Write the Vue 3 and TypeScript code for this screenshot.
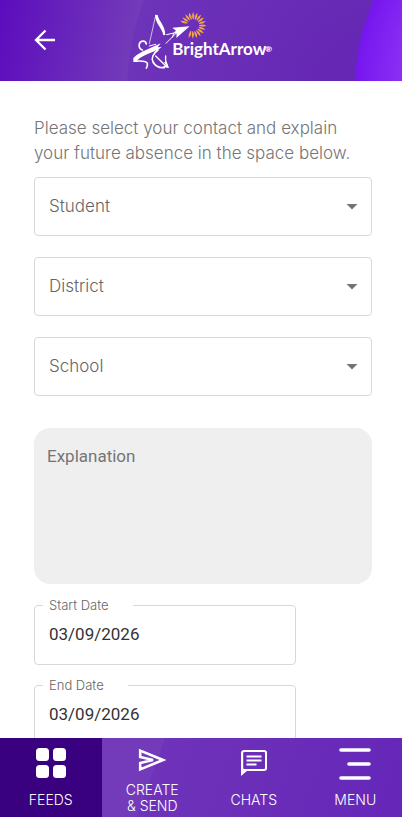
<script setup lang="ts">
import { reactive } from 'vue'

interface Choice {
  id: 'student' | 'district' | 'school'
  label: string
}

interface DateField {
  id: 'start' | 'end'
  label: string
}

const choices: Choice[] = [
  { id: 'student', label: 'Student' },
  { id: 'district', label: 'District' },
  { id: 'school', label: 'School' },
]

const dateFields: DateField[] = [
  { id: 'start', label: 'Start Date' },
  { id: 'end', label: 'End Date' },
]

const form = reactive({
  student: '',
  district: '',
  school: '',
  explanation: '',
  start: '03/09/2026',
  end: '03/09/2026',
})

// The sun's rays run clockwise and leave a gap where the arrow flies in.
const rays: number[] = Array.from({ length: 16 }, (_, i) => -72 + i * 18)
</script>

<template>
  <div class="app">
    <header class="top">
      <button class="back" type="button" aria-label="Back">
        <svg width="24" height="24" viewBox="0 0 24 24" fill="none" stroke="#fff" stroke-width="2.3">
          <path d="M22 12H3.500M12.500 2.500L3 12l9.500 9.500" />
        </svg>
      </button>
      <svg class="logo" width="140" height="60" viewBox="400 30 420 180" role="img" aria-label="BrightArrow">
        <g fill="#f7a540">
          <path
            v-for="angle in rays"
            :key="angle"
            d="M580 58q-6-11 1-22q5 11 1 22z"
            :transform="`rotate(${angle} 580 76)`"
          />
        </g>
        <g fill="#fff">
          <path d="M466 44l8 1c2 17 23 32 23 60l-6 1c-3-22-25-36-25-62z" />
          <path d="M570 79l-52 4 11 9-9 8 11 1-1 13z" />
          <path d="M401 186v-12c10-10 24-18 38-24l44-20-9 12 12-1c-10 9-20 12-33 17-20 8-34 14-44 28z" />
          <path d="M508 204l-20-4 12-4-7-9 8-2z" />
        </g>
        <g fill="none" stroke="#fff" stroke-linecap="round">
          <path stroke-width="2" d="M467 51l-18 80" />
          <path stroke-width="3" d="M499 130l29-29M501 104l21-5-3 12" />
          <path stroke-width="5" d="M440 132c-2-12-18-11-21 0-2 8 1 15 9 18" />
          <path stroke-width="5" d="M406 183c12 1 34-3 37 7 1 6 0 10-3 14" />
          <path stroke-width="5" d="M475 150c-14 10-21 24-15 36 7 13 20 18 34 17" />
          <path stroke-width="4" d="M468 168l30 29M498 168c-1 11 0 22 6 33" />
          <path stroke-width="3" d="M449 138l19-5" />
        </g>
        <text class="wordmark" x="518" y="166">BrightArrow</text>
        <text class="registered" x="797" y="156">®</text>
      </svg>
    </header>

    <main class="content">
      <form class="form" @submit.prevent>
        <p class="intro">Please select your contact and explain your future absence in the space below.</p>

        <div class="choices">
          <div v-for="choice in choices" :key="choice.id" class="choice">
            <select :id="choice.id" v-model="form[choice.id]">
              <option value=""></option>
            </select>
            <label :for="choice.id">{{ choice.label }}</label>
            <svg class="caret" width="12" height="6" viewBox="0 0 12 6" aria-hidden="true">
              <path d="M0.500 0h11L6 5.500z" fill="#757575" />
            </svg>
          </div>
        </div>

        <textarea v-model="form.explanation" class="explanation" placeholder="Explanation" aria-label="Explanation"></textarea>

        <div class="dates">
          <div v-for="field in dateFields" :key="field.id" class="date">
            <label :for="field.id">{{ field.label }}</label>
            <input :id="field.id" v-model="form[field.id]" type="text" />
          </div>
        </div>
      </form>
    </main>

    <nav class="tabs">
      <a class="tab active" href="#feeds">
        <svg width="30" height="30" viewBox="0 0 30 30" fill="#fff">
          <rect x="0" y="0" width="13" height="13" rx="3.500" />
          <rect x="17" y="0" width="13" height="13" rx="3.500" />
          <rect x="0" y="17" width="13" height="13" rx="3.500" />
          <rect x="17" y="17" width="13" height="13" rx="3.500" />
        </svg>
        <span class="caption">FEEDS</span>
      </a>
      <a class="tab two-line" href="#create">
        <svg width="28" height="24" viewBox="0 0 28 24" fill="none" stroke="#fff" stroke-width="2.6">
          <path d="M2.200 2.600L25 12 2.200 21.400V15L15 12 2.200 9z" />
        </svg>
        <span class="caption">CREATE<br />&amp; SEND</span>
      </a>
      <a class="tab" href="#chats">
        <svg width="26" height="30" viewBox="0 0 26 30" fill="none" stroke="#fff" stroke-width="2.200">
          <path d="M1.100 24V5a2 2 0 0 1 2-2h20a2 2 0 0 1 2 2v15a2 2 0 0 1-2 2H5.500z" />
          <path d="M0 20v8L7 22z" fill="#fff" stroke="none" />
          <path d="M5.500 8.500h15M5.500 12.500h15M5.500 16.500h10" />
        </svg>
        <span class="caption">CHATS</span>
      </a>
      <a class="tab" href="#menu">
        <svg width="32" height="32" viewBox="0 0 32 32" fill="none" stroke="#fff" stroke-width="3.600" stroke-linecap="round">
          <path d="M2 2h28M10 16h20M2 30h28" />
        </svg>
        <span class="caption">MENU</span>
      </a>
    </nav>
  </div>
</template>

<style>
body {
  background: #fff;
}
</style>

<style scoped>
.app {
  display: flex;
  flex-direction: column;
  height: 100vh;
  overflow: hidden;
  font-family: Inter, 'Liberation Sans', sans-serif;
  color: #757575;
}

.app *,
.app *::before {
  box-sizing: border-box;
}

.top {
  display: grid;
  grid-template-columns: 1fr auto 1fr;
  align-items: center;
  flex: none;
  height: 81px;
  padding: 0 30px 2px 33px;
  background:
    radial-gradient(circle at 138% 105%, #9036fa 0, #8a2ef4 155px, #7616ef 199px, transparent 200px),
    radial-gradient(circle at 93% 110%, #6425b3 0, #6d33b9 246px, transparent 247px),
    linear-gradient(100deg, #5c0cbd 0, #733bb9 34%, #6728b5 100%);
}

.back {
  display: flex;
  justify-self: start;
  padding: 0;
  border: 0;
  background: none;
}

.logo {
  display: block;
}

.wordmark {
  fill: #fff;
  font: 700 51px Lato, sans-serif;
}

.registered {
  fill: #fff;
  font: 900 25px Lato, sans-serif;
}

.content {
  flex: 1;
  min-height: 0;
  overflow: hidden;
}

.form {
  padding: 35px 30px 20px 34px;
}

.intro {
  margin: 0 0 11px;
  font-size: 17px;
  font-weight: 300;
  line-height: 25px;
  color: #757575;
}

.choices {
  display: grid;
  gap: 21px;
}

.choice {
  display: grid;
  grid-template-columns: 1fr auto;
  align-items: center;
  height: 59px;
}

.choice select {
  grid-area: 1 / 1 / 2 / 3;
  width: 100%;
  height: 100%;
  border: 1px solid #d8d8d8;
  border-radius: 4px;
  background: #fff;
  appearance: none;
}

.choice label {
  grid-area: 1 / 1 / 2 / 2;
  padding: 0 0 2px 15px;
  font-size: 17px;
  font-weight: 300;
  color: #666;
  pointer-events: none;
}

.caret {
  grid-area: 1 / 2 / 2 / 3;
  margin-right: 14px;
  pointer-events: none;
}

.explanation {
  display: block;
  width: 100%;
  height: 156px;
  margin: 32px 0 21px;
  padding: 18px 13px;
  border: 0;
  border-radius: 16px;
  background: #efefef;
  font: 400 17px/20px Roboto, sans-serif;
  resize: none;
}

.explanation::placeholder {
  color: #757575;
}

.dates {
  display: grid;
  gap: 20px;
  width: 262px;
  max-width: 100%;
}

.date {
  position: relative;
  height: 60px;
}

.date label {
  position: absolute;
  top: -8px;
  left: 9px;
  padding: 0 24px 0 6px;
  background: #fff;
  font-size: 13px;
  font-weight: 300;
  line-height: 16px;
  color: #666;
}

.date input {
  width: 100%;
  height: 100%;
  padding: 0 14px 2px;
  border: 1px solid #d8d8d8;
  border-radius: 4px;
  background: #fff;
  font: 400 17px Roboto, sans-serif;
  color: #333;
}

.tabs {
  display: grid;
  grid-template-columns: repeat(4, 1fr);
  flex: none;
  height: 79px;
  margin-right: -4px;
  background: linear-gradient(110deg, #733bb9 0, #733bb9 38%, #6e33b9 38%, #6526b8 100%);
}

.tab {
  display: flex;
  flex-direction: column;
  align-items: center;
  justify-content: space-between;
  padding: 10px 0 9px;
  color: #fff;
  font-size: 14px;
  font-weight: 300;
  line-height: 16px;
  text-align: center;
  text-decoration: none;
}

.tab.active {
  background: #39007f;
}

.two-line {
  padding-bottom: 3px;
}
</style>
